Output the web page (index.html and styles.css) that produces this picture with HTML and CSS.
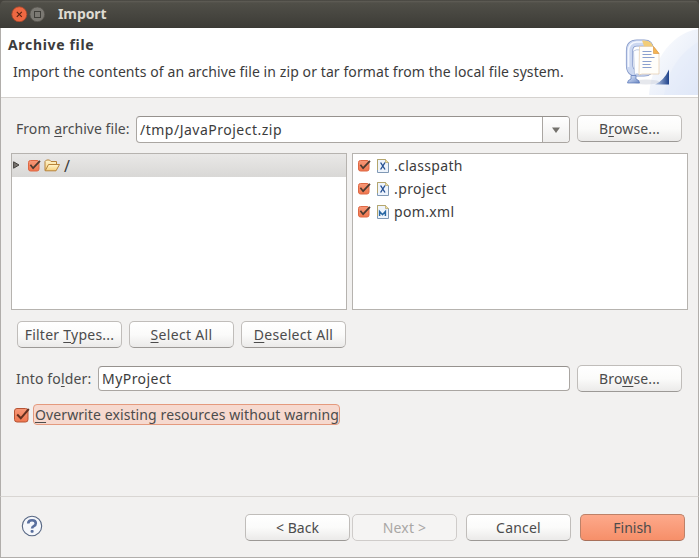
FILE: index.html
```html
<!DOCTYPE html>
<html lang="en">
<head>
<meta charset="utf-8">
<title>Import</title>
<link rel="stylesheet" href="styles.css">
</head>
<body>
<svg class="defs" width="0" height="0">
  <defs>
    <linearGradient id="boxfill" x1="0" y1="0" x2="0" y2="1"><stop offset="0" stop-color="#f79878"/><stop offset="1" stop-color="#f0774f"/></linearGradient>
    <linearGradient id="steel" x1="0" y1="0" x2="1" y2="1"><stop offset="0" stop-color="#e4ecfa"/><stop offset=".5" stop-color="#a9bce2"/><stop offset="1" stop-color="#6c88c2"/></linearGradient>
    <linearGradient id="wedge" x1="0" y1="0" x2="1" y2="0"><stop offset="0" stop-color="#b9c9e5"/><stop offset="1" stop-color="#1f438c"/></linearGradient>
    <linearGradient id="swoosh" x1="0" y1="0" x2="1" y2="1"><stop offset="0" stop-color="#ffffff"/><stop offset="1" stop-color="#dfe7f7"/></linearGradient>
    <linearGradient id="folder" x1="0" y1="0" x2="0" y2="1"><stop offset="0" stop-color="#fff6cf"/><stop offset="1" stop-color="#f6cf78"/></linearGradient>
    <symbol id="check" viewBox="0 0 14 13">
      <rect x=".5" y="1.5" width="10.5" height="10.5" rx="2" fill="url(#boxfill)" stroke="#de6844"/>
      <path d="M2.4 5.8 5.1 9.2 12 1.8" fill="none" stroke="#4b3a30" stroke-width="1.7"/>
    </symbol>
    <symbol id="page" viewBox="0 0 12 14">
      <path d="M.5.5h7.8l3.2 3.2v9.8H.5z" fill="#eef4fc" stroke="#8099b5"/>
      <path d="M.5 11V.5h7.8l3.2 3.2" fill="none" stroke="#b5a66c"/>
      <path d="M8.5.5v3h3" fill="#f3dfa0" stroke="#b5a66c" stroke-width=".7"/>
    </symbol>
    <symbol id="xfile" viewBox="0 0 12 14">
      <use href="#page" width="12" height="14"/>
      <path d="M3.6 3.5l4.4 7M8 3.5l-4.4 7" fill="none" stroke="#244f91" stroke-width="1.4"/>
    </symbol>
  </defs>
</svg>
<div class="window">
  <header class="titlebar">
    <svg class="ctl" width="34" height="16" viewBox="0 0 34 16">
      <circle cx="8.3" cy="8.3" r="7.5" fill="#ee6842" stroke="#a8472b" stroke-width=".8"/>
      <path d="M5.8 5.8l5 5M10.8 5.8l-5 5" stroke="#55210f" stroke-width="1.1"/>
      <circle cx="26.3" cy="8.3" r="7.4" fill="#7b7973" stroke="#55534c" stroke-width=".8"/>
      <rect x="23.5" y="5.5" width="6" height="6" fill="none" stroke="#403f3a"/>
    </svg>
    <span class="title">Import</span>
  </header>
  <section class="banner">
    <div class="banner-text">
      <h1>Archive file</h1>
      <p>Import the contents of an archive file in zip or tar format from the local file system.</p>
    </div>
    <svg class="banner-art" width="78" height="67" viewBox="620 28 78 67">
      <path d="M649 95C651 66 668 34 698 29v66z" fill="url(#swoosh)"/>
      <path d="M664 95c4-25 15-41 34-53v53z" fill="#dfe8f8" opacity=".35"/>
      <ellipse cx="646" cy="82" rx="13" ry="2.4" fill="#c8cdd6" opacity=".45"/>
      <path d="M650 50v-1q0-6-6-6h-7q-7.5 0-7.500 8v14q0 8 7.500 8h7q6 0 6-6" fill="none" stroke="#8599c9" stroke-width="7.2"/>
      <path d="M650 50v-1q0-6-6-6h-7q-7.5 0-7.500 8v14q0 8 7.500 8h7q6 0 6-6" fill="none" stroke="#ccd8f1" stroke-width="5.6"/>
      <path d="M628.500 67V51q0-8 8-9h8" fill="none" stroke="#f5f8ff" stroke-width="1.700"/>
      <path d="M642 40.600h2q8 0 9.500 7h-9z" fill="#f2cd79"/>
      <path d="M631 75.500h5v3.500q3.500 1 3.500 4h-12q0-3 3.500-4z" fill="url(#steel)" stroke="#5876b8" stroke-width=".7"/>
      <path d="M633.500 51q3-2 7-1v25q-4-2-6-.5z" fill="#fdfeff" stroke="#a5b5d6" stroke-width=".7"/>
      <path d="M639.500 46.500h14l5.500 7v20.500h-17l-3 1z" fill="#fffefa" stroke="#e0c49d" stroke-width=".6"/>
      <path d="M653.500 46.500v7h5.500z" fill="#f4b452" stroke="#d99035" stroke-width=".6"/>
      <path d="M642.500 51.500h9M642.500 54.500h9M642.500 57.500h12M642.500 61.500h9M642.500 64.500h8M642.500 67.500h9" stroke="#8ba0ce"/>
      <path d="M655 84.500q9-4 14-15v15z" fill="url(#wedge)"/>
    </svg>
  </section>
  <main class="content">
    <div class="field-row source">
      <label class="t-from">From <u>a</u>rchive file:</label>
      <div class="combo"><span class="value t-path">/tmp/JavaProject.zip</span>
        <span class="drop"><svg width="8" height="6" viewBox="0 0 8 6"><path d="M0 .5h8L4 6z" fill="#73716c"/></svg></span></div>
      <button class="btn"><span class="t-br">B<u>r</u>owse...</span></button>
    </div>
    <div class="panes">
      <div class="pane">
        <div class="tree-row">
          <svg class="arrow" width="7" height="8" viewBox="0 0 7 8"><path d="M.6.8 6 4 .6 7.2z" fill="#77736e" stroke="#45423e"/></svg>
          <svg class="chk" width="14" height="13"><use href="#check"/></svg>
          <svg width="16" height="13" viewBox="0 0 16 13"><path d="M1 11.5V2.500L2.500 1h3L7 2.500h5.500v3" fill="url(#folder)" stroke="#b7833a"/><path d="M1.200 11.800 4.500 5.500h11l-3.500 6.300z" fill="url(#folder)" stroke="#b7833a" stroke-linejoin="round"/></svg>
          <span class="slash">/</span>
        </div>
      </div>
      <div class="pane files">
        <div class="file"><svg class="chk" width="14" height="13"><use href="#check"/></svg><svg width="12" height="14"><use href="#xfile"/></svg><span class="t-cls">.classpath</span></div>
        <div class="file"><svg class="chk" width="14" height="13"><use href="#check"/></svg><svg width="12" height="14"><use href="#xfile"/></svg><span class="t-prj">.project</span></div>
        <div class="file"><svg class="chk" width="14" height="13"><use href="#check"/></svg><svg width="12" height="14"><use href="#page"/><path d="M2.600 11V6.500l2.900 3.200 2.900-3.200V11" fill="none" stroke="#2868a5" stroke-width="1.500"/></svg><span class="t-pom">pom.xml</span></div>
      </div>
    </div>
    <div class="actions">
      <button class="btn"><span class="t-flt">Filter <u>T</u>ypes...</span></button>
      <button class="btn"><span class="t-sel"><u>S</u>elect All</span></button>
      <button class="btn"><span class="t-des"><u>D</u>eselect All</span></button>
    </div>
    <div class="field-row target">
      <label class="t-into">Into fo<u>l</u>der:</label>
      <div class="entry"><span class="t-my">MyProject</span></div>
      <button class="btn"><span class="t-br">Bro<u>w</u>se...</span></button>
    </div>
    <div class="option">
      <svg width="17" height="16" viewBox="0 0 17 16"><rect x=".5" y="1.500" width="13.500" height="13.500" rx="2.500" fill="url(#boxfill)" stroke="#b65434"/><path d="M3.200 7.500 6.800 11.300 14.800 2" fill="none" stroke="#63301f" stroke-width="2"/></svg>
      <span class="option-label"><span class="t-over"><u>O</u>verwrite existing resources without warning</span></span>
    </div>
  </main>
  <footer class="footer">
    <svg class="help" width="22" height="22" viewBox="0 0 22 22"><circle cx="11" cy="11" r="9.700" fill="#f5f7fb" stroke="#566683" stroke-width="1.100"/><path d="M7.200 8.500Q7.200 5.300 11 5.300q3.800 0 3.800 3 0 1.800-2 2.800-1.700.9-1.700 2.500" fill="none" stroke="#596f9e" stroke-width="2.600"/><rect x="9.600" y="15" width="3" height="2.800" rx="1" fill="#596f9e"/></svg>
    <div class="nav">
      <button class="btn"><span class="t-back">&lt; Back</span></button>
      <button class="btn disabled" disabled><span class="t-next">Next &gt;</span></button>
    </div>
    <button class="btn cancel"><span class="t-can">Cancel</span></button>
    <button class="btn primary"><span class="t-fin">Finish</span></button>
  </footer>
</div>
</body>
</html>
```
FILE: styles.css
```css
* { box-sizing: border-box; }
body { margin: 0; background: #45433d; font: 14px/20px "Noto Sans", "Open Sans", sans-serif; color: #4c4c4c; }
.defs { position: absolute; }
.window { width: 699px; height: 558px; display: flex; flex-direction: column; overflow: hidden; }
.window svg { flex: none; display: block; }
u { text-decoration-thickness: 1px; text-underline-offset: 2px; text-decoration-skip-ink: none; }
span, label { white-space: nowrap; }

.titlebar { height: 28px; flex: none; display: flex; align-items: center; padding-left: 11px; background: linear-gradient(#383732 0, #605e57 1px, #504f48 3px, #3d3c37 27px, #383732); color: #dfdbd2; border-radius: 6px 6px 0 0; }
.title { margin-left: 13px; font-weight: 700; letter-spacing: -.1px; }

.banner { height: 70px; flex: none; display: flex; justify-content: space-between; background: #fff; border: solid #b1aeab; border-width: 0 1px; box-shadow: inset 0 -1px #d5d2cf; color: #3c3c3c; }
.banner-text { padding: 7px 0 0 7px; }
h1 { margin: 0; font-size: 14px; line-height: 20px; letter-spacing: .67px; font-variant-ligatures: none; }
p { margin: 7px 0 0 5px; white-space: nowrap; letter-spacing: .09px; }

.content { height: 399px; flex: none; background: #f2f1f0; border: solid #b1aeab; border-width: 0 1px; border-bottom: 1px solid #d9d6d3; padding: 17px 10px 0; }
.field-row { display: flex; align-items: center; padding-left: 5px; height: 27px; }
.field-row .btn { margin-left: 7px; margin-right: 6px; }
.combo, .entry { border: 1px solid #aaa6a2; border-top-color: #96928e; border-radius: 4px; background: #fff; color: #3c3c3c; display: flex; align-items: center; }
.combo { width: 434px; height: 27px; flex: none; align-self: flex-start; margin: 1px 0 0 auto; padding-left: 3px; }
.combo .value { margin-top: 1px; }
.drop { width: 27px; height: 25px; margin-left: auto; border-left: 1px solid #aaa6a2; border-radius: 0 3px 3px 0; background: linear-gradient(#fff, #efeeed); display: grid; place-items: center; }
.btn { width: 105px; height: 27px; flex: none; padding: 0; font: inherit; color: #4c4c4c; border: 1px solid #c0bdba; border-bottom-color: #9c9996; border-radius: 5px; background: linear-gradient(#fff, #fbfbfa 50%, #ebeae9); display: flex; align-items: center; justify-content: center; }

.t-from { letter-spacing: .05px; }
.t-path { letter-spacing: .5px; }
.t-br { letter-spacing: .15px; }
.t-cls { letter-spacing: .33px; }
.t-prj { letter-spacing: .4px; }
.t-pom { letter-spacing: .33px; }
.t-flt { letter-spacing: .25px; }
.t-sel { letter-spacing: .33px; }
.t-des { letter-spacing: .3px; }
.t-into { letter-spacing: .15px; }
.t-my { letter-spacing: .45px; }
.t-over { letter-spacing: .1px; }
.t-next, .t-can { letter-spacing: .2px; }

.panes { display: flex; gap: 5px; margin-top: 11px; }
.pane { width: 336px; height: 157px; background: #fff; border: 1px solid #b6b3af; color: #3c3c3c; }
.tree-row { height: 23px; display: flex; align-items: center; background: linear-gradient(#e9e8e7, #d9d8d6); }
.arrow { margin: 0 8px 1px 1px; }
.tree-row .chk { margin-right: 2px; }
.slash { margin-left: 4px; font-size: 16px; }
.file { height: 23px; display: flex; align-items: center; padding-left: 5px; }
.file .chk { margin-right: 5px; }
.file span { margin-left: 5px; }

.actions { display: flex; gap: 7px; padding-left: 6px; margin-top: 11px; }
.target { margin-top: 17px; }
.entry { width: 472px; height: 25px; margin-left: auto; padding-left: 3px; }
.option { display: flex; align-items: center; margin-top: 12px; padding-left: 3px; gap: 2px; }
.option-label { width: 307px; height: 21px; padding-left: 1px; display: flex; align-items: center; border: 1px solid #e49a7e; border-radius: 4px; background: #f6d9cf; }

.footer { height: 61px; flex: none; display: flex; align-items: center; padding: 0 13px 1px 20px; background: #f2f1f0; border: solid #b1aeab; border-width: 0 1px 1px; }
.footer .btn { margin-top: 2px; }
.help { margin-bottom: 2px; }
.nav { display: flex; gap: 2px; margin-left: auto; }
.cancel { margin-left: 9px; }
.footer .primary { margin-left: 9px; border-color: #bd8168; border-bottom-color: #a8705a; background: linear-gradient(#fda98b, #f68f69); }
.footer .disabled { color: #a9a7a5; border-color: #cfccca; background: #f5f4f3; }
```
